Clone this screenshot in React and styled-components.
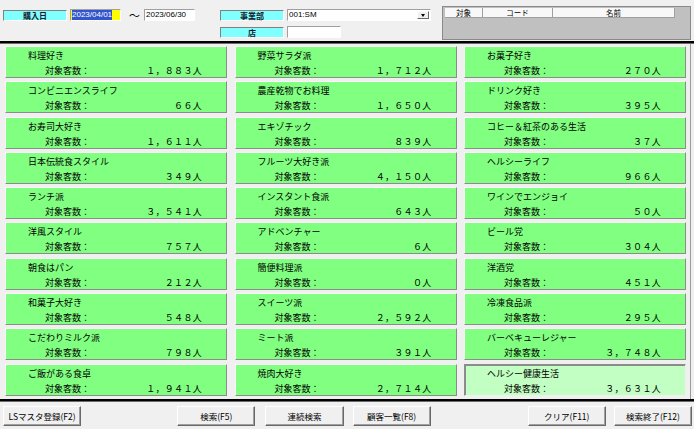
import styled, { createGlobalStyle, css } from "styled-components";

const Global = createGlobalStyle`
  html, body {
    margin: 0;
    padding: 0;
    background: #f0f0f0;
  }
  body {
    font-family: "Noto Sans CJK JP", "Noto Sans", sans-serif;
    color: #000;
  }
`

const Page = styled.div`
  width: 694px;
  height: 429px;
  display: flex;
  flex-direction: column;
  background: #f0f0f0;
  overflow: hidden;
`

const Header = styled.div`
  height: 41px;
  display: flex;
  align-items: flex-start;
  padding: 0 3px 0 3px;
  box-sizing: border-box;
`

const sunken = css`
  border-top: 1px solid #808080;
  border-left: 1px solid #808080;
  border-bottom: 1px solid #fff;
  border-right: 1px solid #fff;
`

const raised = css`
  border-top: 1px solid #fff;
  border-left: 1px solid #fff;
  border-bottom: 1px solid #696969;
  border-right: 1px solid #696969;
`

const FieldRow = styled.div`
  display: flex;
  align-items: center;
  margin-top: ${p => p.$top || 0}px;
`

const Label = styled.div`
  width: 64px;
  height: 11px;
  box-sizing: border-box;
  background: #80ffff;
  ${sunken};
  font-size: 8px;
  line-height: 9px;
  text-align: center;
  color: #1a1a2e;
  font-weight: 700;
`

const Input = styled.div`
  width: ${p => p.$w}px;
  height: ${p => p.$h || 12}px;
  box-sizing: border-box;
  margin-left: ${p => p.$ml || 3}px;
  background: ${p => p.$bg || "#fff"};
  ${sunken};
  border-top-color: #a0a0a0;
  border-left-color: #a0a0a0;
  font-size: 8px;
  line-height: 10px;
  padding-left: 1px;
  display: flex;
  align-items: center;
  position: relative;
  font-family: "Liberation Sans", sans-serif;
`

const Selected = styled.span`
  background: #3355cc;
  color: #fff;
  line-height: 10px;
`

const Tilde = styled.span`
  font-size: 11px;
  margin-left: 8px;
  margin-right: 1px;
  line-height: 10px;
`

const DateGroup = styled.div`
  display: flex;
  align-items: center;
  margin-top: 9px;
`

const DeptGroup = styled.div`
  display: flex;
  flex-direction: column;
  margin-left: 25px;
  margin-top: 9px;
`

const DropBtn = styled.div`
  position: absolute;
  right: 1px;
  top: 1px;
  width: 12px;
  height: 8px;
  box-sizing: border-box;
  background: #f0f0f0;
  ${raised};
  display: flex;
  align-items: center;
  justify-content: center;
  &::after {
    content: "";
    border-left: 2.5px solid transparent;
    border-right: 2.5px solid transparent;
    border-top: 3px solid #000;
  }
`

const TablePanel = styled.div`
  margin-left: auto;
  margin-top: 6px;
  width: 249px;
  height: 34px;
  box-sizing: border-box;
  background: #c0c0c0;
  border: 1px solid #8a8a8a;
  padding: 1px 0 0 2px;
`

const TableHead = styled.div`
  display: flex;
  height: 10px;
`

const HeadCell = styled.div`
  width: ${p => p.$w}px;
  box-sizing: border-box;
  background: #f8f8f8;
  border-right: 1px solid #a0a0a0;
  border-bottom: 1px solid #a0a0a0;
  font-size: 7.5px;
  line-height: 9px;
  text-align: center;
`

const Divider = styled.div`
  height: 2px;
  background: #000;
  border-bottom: 1px solid #6b6b6b;
`

const Grid = styled.div`
  flex: 1;
  display: grid;
  grid-template-columns: repeat(3, 222px);
  grid-template-rows: repeat(10, 32px);
  grid-auto-flow: column;
  column-gap: 7.5px;
  row-gap: 3.3px;
  padding: 2px 0 0 5px;
  box-sizing: border-box;
  border-right: 1px solid #9a9a9a;
  margin-right: 3px;
`

const Card = styled.div`
  box-sizing: border-box;
  background: ${p => (p.$light ? "#c2ffc2" : "#80ff80")};
  ${p => p.$light
    ? css`
      border: 1px solid #8c8c8c;
      border-bottom-color: #f0f0f0;
      border-right-color: #f0f0f0;
      box-shadow: inset 1px 1px 0 #8c8c8c;
    `
    : css`
      border-top: 1px solid #fafafa;
      border-left: 1px solid #fafafa;
      border-bottom: 1px solid #8c8c8c;
      border-right: 1px solid #8c8c8c;
    `}
  display: flex;
  flex-direction: column;
  padding: 3px 24px 0 22px;
`

const Title = styled.div`
  font-size: 9px;
  line-height: 12px;
  height: 13px;
`

const CountRow = styled.div`
  display: flex;
  justify-content: space-between;
  padding-left: 17px;
  font-size: 9px;
  line-height: 12px;
  margin-top: 2px;
`

const Value = styled.span`
  letter-spacing: 0.3px;
`

const Footer = styled.div`
  height: 27px;
  display: flex;
  align-items: center;
  padding: 0 2px 0 3px;
  box-sizing: border-box;
`

const Button = styled.div`
  width: 79px;
  height: 20px;
  box-sizing: border-box;
  background: #f0f0f0;
  ${raised};
  box-shadow: inset -1px -1px 0 #a0a0a0;
  font-size: 8.5px;
  display: flex;
  align-items: center;
  justify-content: center;
  margin-left: ${p => p.$ml || 0}px;
`

const toWide = (n) =>
  n.toLocaleString("en-US").replace(/[0-9,]/g, c =>
    c === "," ? "，" : String.fromCharCode(c.charCodeAt(0) + 0xfee0)
  ) + "人"

const items = [
  ["料理好き", 1883], ["コンビニエンスライフ", 66], ["お寿司大好き", 1611],
  ["日本伝統食スタイル", 349], ["ランチ派", 3541], ["洋風スタイル", 757],
  ["朝食はパン", 212], ["和菓子大好き", 548], ["こだわりミルク派", 798],
  ["ご飯がある食卓", 1941],
  ["野菜サラダ派", 1712], ["農産乾物でお料理", 1650], ["エキゾチック", 839],
  ["フルーツ大好き派", 4150], ["インスタント食派", 643], ["アドベンチャー", 6],
  ["簡便料理派", 0], ["スイーツ派", 2592], ["ミート派", 391],
  ["焼肉大好き", 2714],
  ["お菓子好き", 270], ["ドリンク好き", 395], ["コヒー＆紅茶のある生活", 37],
  ["ヘルシーライフ", 966], ["ワインでエンジョイ", 50], ["ビール党", 304],
  ["洋酒党", 451], ["冷凍食品派", 295], ["バーベキューレジャー", 3748],
  ["ヘルシー健康生活", 3631],
]

export default function App() {
  return (
    <Page>
      <Global />
      <Header>
        <DateGroup>
          <Label>購入日</Label>
          <Input $w={51} $bg="#ffff00"><Selected>2023/04/01</Selected></Input>
          <Tilde>～</Tilde>
          <Input $w={51}>2023/06/30</Input>
        </DateGroup>
        <DeptGroup>
          <FieldRow>
            <Label>事業部</Label>
            <Input $w={144}>
              001:SM
              <DropBtn />
            </Input>
          </FieldRow>
          <FieldRow $top={5}>
            <Label>店</Label>
            <Input $w={54}></Input>
          </FieldRow>
        </DeptGroup>
        <TablePanel>
          <TableHead>
            <HeadCell $w={38}>対象</HeadCell>
            <HeadCell $w={70}>コード</HeadCell>
            <HeadCell $w={122}>名前</HeadCell>
          </TableHead>
        </TablePanel>
      </Header>
      <Divider />
      <Grid>
        {items.map(([name, count], i) => (
          <Card key={name} $light={i === items.length - 1}>
            <Title>{name}</Title>
            <CountRow>
              <span>対象客数：</span>
              <Value>{toWide(count)}</Value>
            </CountRow>
          </Card>
        ))}
      </Grid>
      <Divider />
      <Footer>
        <Button>LSマスタ登録(F2)</Button>
        <Button $ml={96}>検索(F5)</Button>
        <Button $ml={10}>連続検索</Button>
        <Button $ml={9}>顧客一覧(F8)</Button>
        <Button $ml={97}>クリア(F11)</Button>
        <Button $ml={8}>検索終了(F12)</Button>
      </Footer>
    </Page>
  )
}
